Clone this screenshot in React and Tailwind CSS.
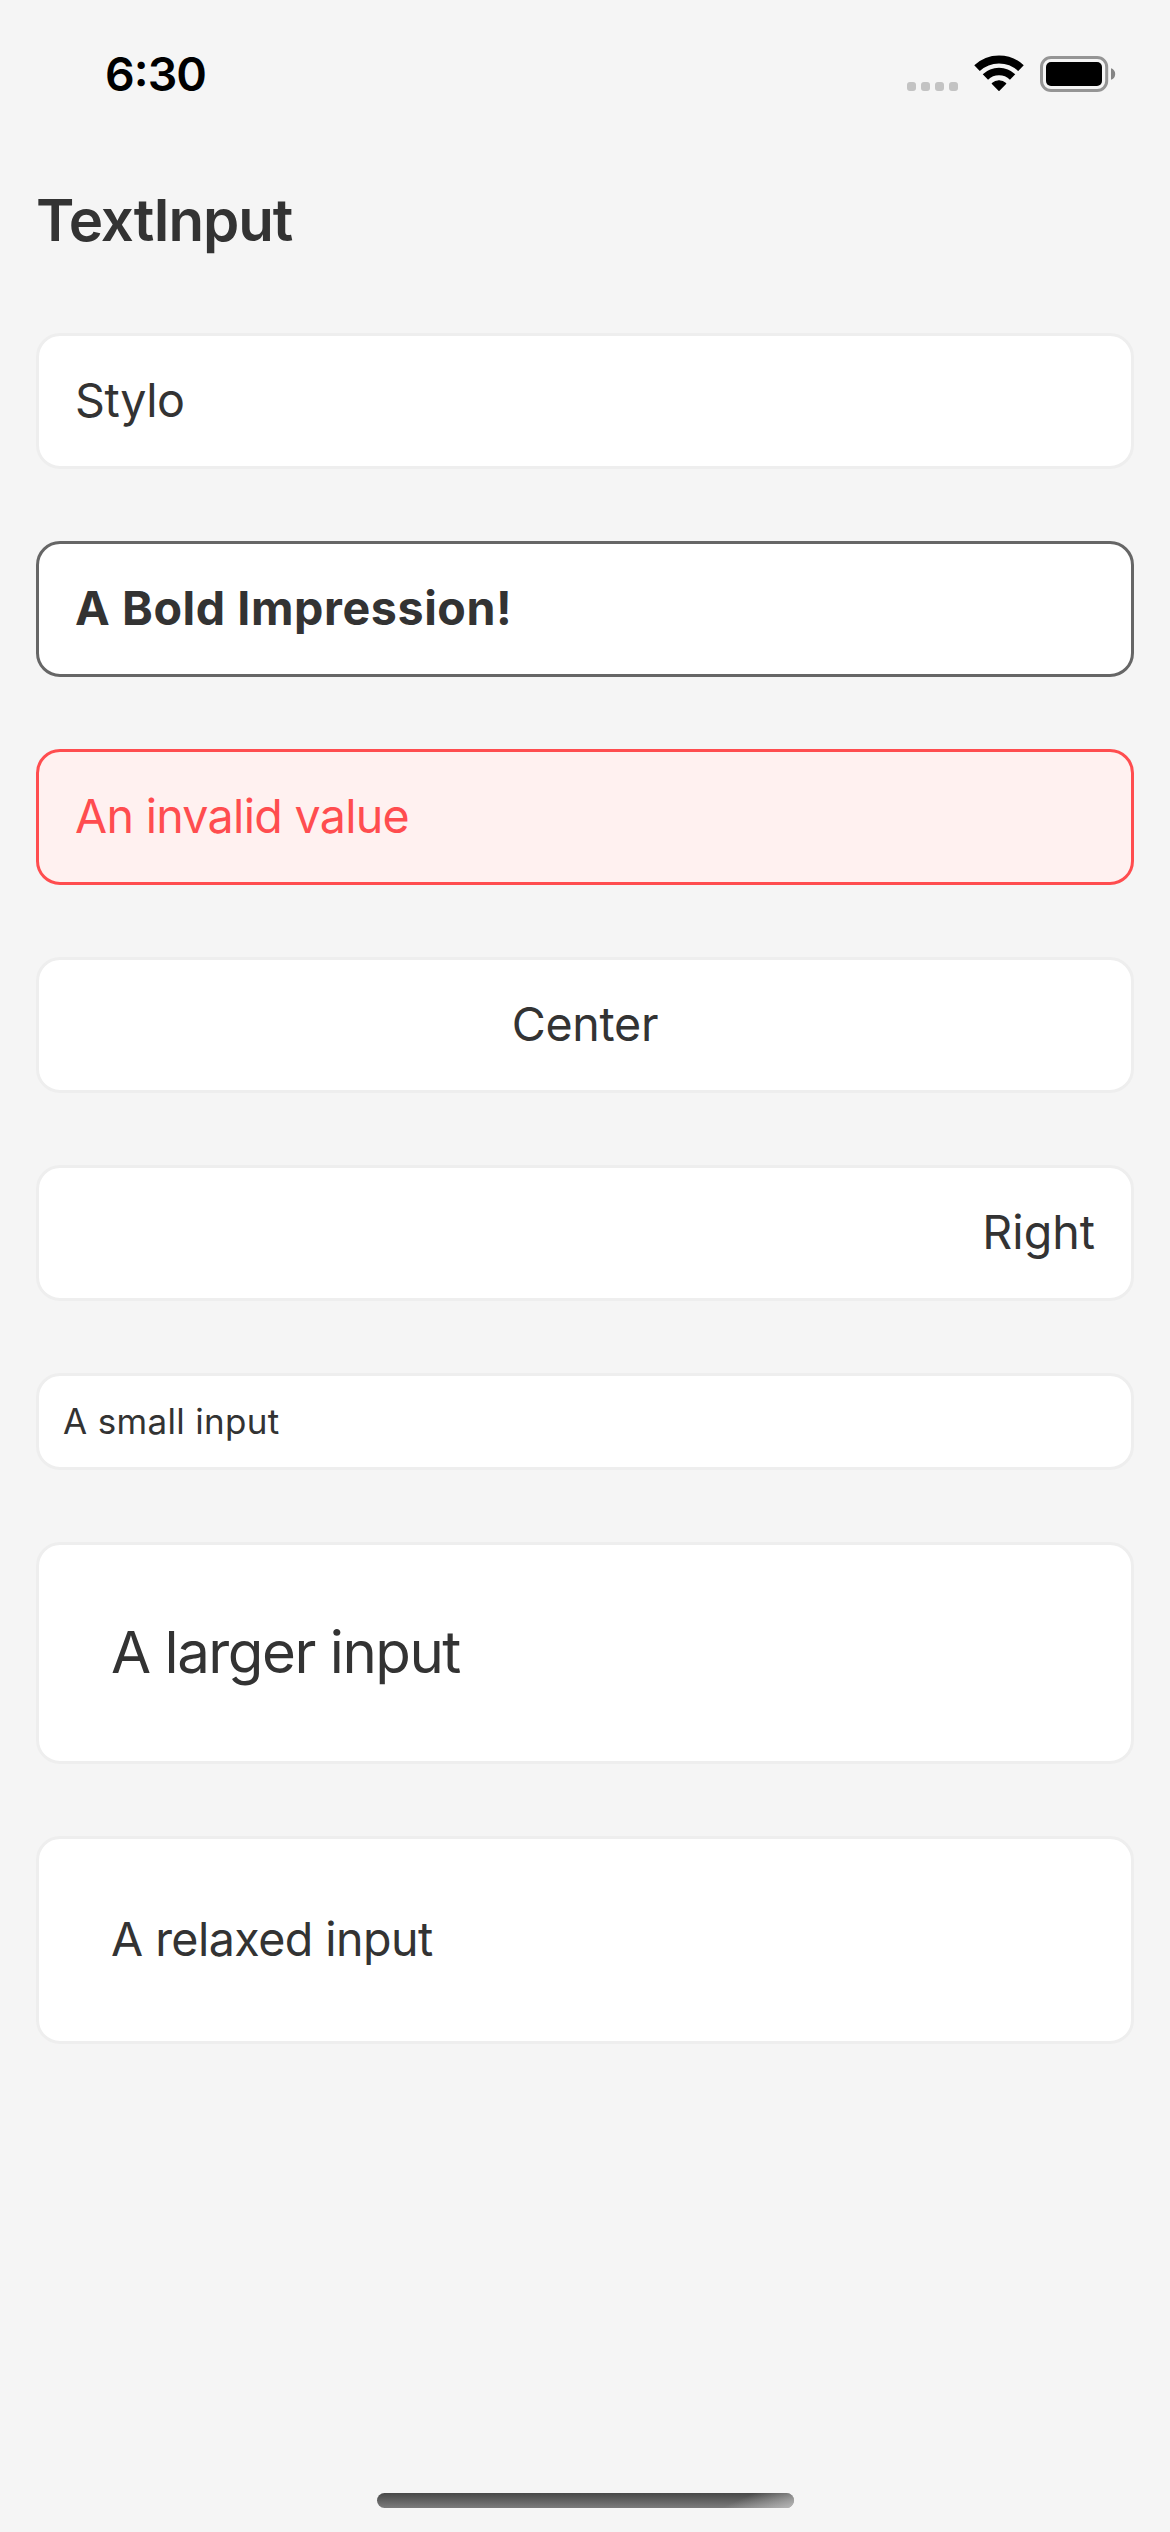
import React from "react";

function SignalDots() {
  return (
    <div className="mb-px flex gap-[5px]">
      {[0, 1, 2, 3].map((i) => (
        <span key={i} className="size-[9px] rounded-[3px] bg-[#c3c3c3]" />
      ))}
    </div>
  );
}

function WifiIcon() {
  return (
    <svg width="50" height="38" viewBox="0 0 50 38" fill="none" stroke="#000">
      <path d="M3 14.2A32 32 0 0 1 47 14.2" strokeWidth="8" />
      <path d="M11.4 23A19.5 19.5 0 0 1 38.6 23" strokeWidth="7.6" />
      <path
        d="M25 36.2L18.4 29.5A9.6 9.6 0 0 1 31.6 29.5Z"
        fill="#000"
        strokeWidth="1.4"
        strokeLinejoin="round"
      />
    </svg>
  );
}

function BatteryIcon() {
  return (
    <svg width="76" height="36" viewBox="0 0 76 36">
      <rect x="1.5" y="1.5" width="65.2" height="33" rx="9.5" fill="none" stroke="#959595" strokeWidth="3" />
      <rect x="6" y="6" width="56" height="24" rx="5" fill="#000" />
      <path d="M71 12.2C73.6 13 75.2 15.2 75.2 18S73.6 23 71 23.8Z" fill="#858585" />
    </svg>
  );
}

function StatusBar() {
  return (
    <header className="flex h-[141px] shrink-0 items-start justify-between pt-[54px] pr-[54px] pl-[105px]">
      <time className="text-[46.5px] leading-[40px] font-semibold tracking-[-0.95px] text-black [font-feature-settings:'case','calt']">
        6:30
      </time>
      <div className="flex items-end gap-4">
        <SignalDots />
        <WifiIcon />
        <BatteryIcon />
      </div>
    </header>
  );
}

const base = "flex items-center whitespace-pre rounded-[24px] border-[3px]";
const normal = "border-[#eeeeee] bg-white text-[#333333]";

function Field({ className, children }) {
  return <div className={`${base} ${className}`}>{children}</div>;
}

export default function App() {
  return (
    <div className="flex h-[2532px] w-[1170px] flex-col overflow-hidden bg-[#f5f5f5] font-['Inter',sans-serif]">
      <StatusBar />
      <main className="flex flex-1 flex-col px-9">
        <h1 className="mb-[34px] text-[58.2px] leading-[158px] font-semibold tracking-[-1.09px] text-[#333333]">
          TextInput
        </h1>
        <div className="flex flex-col gap-[72px]">
          <Field className={`${normal} h-[136px] px-9 text-[46.6px] tracking-[-0.44px]`}>Stylo</Field>
          <Field className="h-[136px] border-[#666666] bg-white px-9 text-[46.6px] font-bold tracking-[0.58px] text-[#333333]">
            A Bold Impression!
          </Field>
          <Field className="h-[136px] border-[#ff4d4f] bg-[#fff1f0] px-9 text-[46.6px] tracking-[-0.71px] text-[#ff4d4f]">
            An invalid value
          </Field>
          <Field className={`${normal} h-[136px] justify-center px-9 text-[46.6px] tracking-[-0.28px]`}>Center</Field>
          <Field className={`${normal} h-[136px] justify-end px-9 text-[46.6px]`}>Right</Field>
          <Field className={`${normal} h-[97px] px-6 text-[35px] tracking-[0.32px]`}>A small input</Field>
          <Field className={`${normal} h-[222px] px-[72px] text-[58.2px] tracking-[-1.48px]`}>A larger input</Field>
          <Field className={`${normal} h-[208px] px-[72px] text-[46.6px] tracking-[-0.55px]`}>A relaxed input</Field>
        </div>
      </main>
      <footer className="flex shrink-0 justify-center pb-6">
        <div className="h-[15px] w-[417px] overflow-hidden rounded-full bg-linear-to-b from-[#484848] to-[#7c7c7c]">
          <div className="ml-auto h-full w-[100px] bg-[linear-gradient(155deg,transparent_45%,rgba(200,200,200,0.8)_100%)]" />
        </div>
      </footer>
    </div>
  );
}
